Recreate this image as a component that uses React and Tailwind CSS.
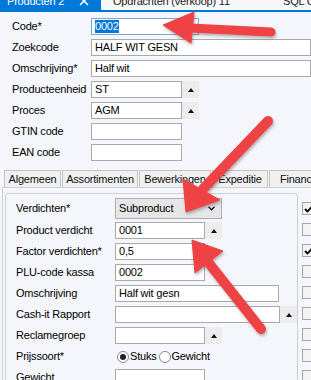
import React from "react";

const Spin = () => (
  <div className="w-[17px] h-[17px] bg-[#ececec] flex items-center justify-center">
    <svg width="6" height="4" viewBox="0 0 6 4">
      <path d="M3 0L6 4H0z" fill="#111" />
    </svg>
  </div>
);

function Input({ value, w, spin, grow, focus }) {
  return (
    <div className={`flex h-[17px] ${grow ? "flex-1" : ""}`}>
      <div
        className={`h-[17px] bg-white border flex items-center pl-[3px] whitespace-nowrap overflow-hidden ${
          focus ? "border-[#7aa7d9]" : "border-[#a9a9a9]"
        } ${grow ? "flex-1" : ""}`}
        style={grow ? undefined : { width: w }}
      >
        {focus ? <span className="bg-[#0078d7] text-white leading-[13px]">{value}</span> : value}
      </div>
      {spin && <Spin />}
    </div>
  );
}

function Row({ label, labelW, children, h = "h-[17px]" }) {
  return (
    <div className={`flex items-center ${h}`}>
      <div className="shrink-0 whitespace-nowrap" style={{ width: labelW }}>
        {label}
      </div>
      {children}
    </div>
  );
}

function Check({ on }) {
  return (
    <div className="w-[13px] h-[13px] border border-[#a6a6a6] bg-[#f3f3f3] flex items-center justify-center">
      {on && (
        <svg width="9" height="8" viewBox="0 0 9 8">
          <path d="M1 4l2.5 2.5L8 1.5" stroke="#000" strokeWidth="1.8" fill="none" />
        </svg>
      )}
    </div>
  );
}

function Radio({ on, label }) {
  return (
    <div className="flex items-center gap-[1px]">
      <div className="w-[12px] h-[12px] rounded-full border border-[#8a8a8a] bg-white flex items-center justify-center">
        {on && <div className="w-[6px] h-[6px] rounded-full bg-[#222]" />}
      </div>
      <span>{label}</span>
    </div>
  );
}

const tabs = [
  ["Algemeen", 57],
  ["Assortimenten", 76],
  ["Bewerkingen", 72],
  ["Expeditie", 56],
  ["Financiele", 70],
];

export default function App() {
  return (
    <div className="relative w-[311px] h-[380px] overflow-hidden bg-[#f5f6fb] font-['Liberation_Sans',Arial,sans-serif] text-[11px] text-black tracking-[-0.2px]">
      {/* document tabs */}
      <div className="flex h-[10px] overflow-hidden bg-[#f7f7f7] whitespace-nowrap">
        <div className="w-[101px] shrink-0 bg-[#0078d7] text-white flex items-start pl-[7px]">
          <span className="-mt-[4px] leading-[11px]">Producten 2</span>
          <svg className="ml-[15px] -mt-[4px]" width="10" height="10" viewBox="0 0 10 10">
            <path d="M1 1l8 8M9 1l-8 8" stroke="#fff" strokeWidth="1.6" />
          </svg>
        </div>
        <div className="w-[170px] shrink-0 flex items-start pl-[12px] text-[#222]">
          <span className="-mt-[4px] leading-[11px]">Opdrachten (verkoop) 11</span>
        </div>
        <div className="flex items-start pl-[12px] text-[#222]">
          <span className="-mt-[4px] leading-[11px]">SQL Commands</span>
        </div>
      </div>
      <div className="h-[2px] bg-[#0078d7]" />

      {/* header fields */}
      <div className="flex flex-col gap-[4px] pt-[6px] pl-[12px]">
        <Row label="Code*" labelW={79}>
          <Input value="0002" w={108} focus />
        </Row>
        <Row label="Zoekcode" labelW={79}>
          <Input value="HALF WIT GESN" grow />
        </Row>
        <Row label="Omschrijving*" labelW={79}>
          <Input value="Half wit" grow />
        </Row>
        <Row label="Producteenheid" labelW={79}>
          <Input value="ST" w={91} spin />
        </Row>
        <Row label="Proces" labelW={79}>
          <Input value="AGM" w={91} spin />
        </Row>
        <Row label="GTIN code" labelW={79}>
          <Input value="" w={91} />
        </Row>
        <Row label="EAN code" labelW={79}>
          <Input value="" w={91} />
        </Row>
      </div>

      {/* page tabs */}
      <div className="flex gap-[1px] mt-[9px] pl-[4px] h-[17px] whitespace-nowrap">
        {tabs.map(([t, w]) => (
          <div
            key={t}
            className="shrink-0 h-[17px] bg-[#f0f0f0] border border-b-0 border-[#c3c3c3] flex items-center justify-center text-[#111]"
            style={{ width: w }}
          >
            {t}
          </div>
        ))}
      </div>

      {/* tab page */}
      <div className="ml-[2px] border-l border-t border-[#cfcfcf] h-[200px] flex">
        <div className="ml-[2px] mt-[5px] w-[293px] h-[220px] shrink-0 border border-[#cfcfcf] rounded-[3px] pl-[10px] pt-[4px] flex flex-col">
          <Row label="Verdichten*" labelW={99} h="h-[21px]">
            <div className="w-[107px] h-[21px] bg-[#e6e6e6] border border-[#adadad] flex items-center pl-[3px] pr-[6px] justify-between">
              <span>Subproduct</span>
              <svg width="7" height="5" viewBox="0 0 7 5">
                <path d="M0.5 0.8L3.5 3.8L6.5 0.8" stroke="#111" strokeWidth="1.3" fill="none" />
              </svg>
            </div>
          </Row>
          <div className="flex flex-col gap-[4px] mt-[3px]">
            <Row label="Product verdicht" labelW={99}>
              <Input value="0001" w={90} spin />
            </Row>
            <Row label="Factor verdichten*" labelW={99}>
              <Input value="0,5" w={90} />
            </Row>
            <Row label="PLU-code kassa" labelW={99}>
              <Input value="0002" w={90} />
            </Row>
            <Row label="Omschrijving" labelW={99}>
              <Input value="Half wit gesn" w={164} />
            </Row>
            <Row label="Cash-it Rapport" labelW={99}>
              <Input value="" w={165} spin />
            </Row>
            <Row label="Reclamegroep" labelW={99}>
              <Input value="" w={90} spin />
            </Row>
            <Row label="Prijssoort*" labelW={101}>
              <div className="flex items-center gap-[2px]">
                <Radio on label="Stuks" />
                <Radio label="Gewicht" />
              </div>
            </Row>
            <Row label="Gewicht" labelW={99}>
              <Input value="" w={90} />
            </Row>
          </div>
        </div>
        <div className="ml-[4px] pt-[14px] flex flex-col gap-[8px]">
          <Check on />
          <Check />
          <Check on />
          <Check />
          <Check />
          <Check />
          <Check />
          <Check />
          <Check />
        </div>
      </div>

      {/* annotation arrows */}
      <svg className="absolute inset-0 pointer-events-none" width="311" height="380" viewBox="0 0 311 380">
        <defs>
          <filter id="sh" x="-20%" y="-20%" width="140%" height="140%">
            <feDropShadow dx="1" dy="2" stdDeviation="1.5" floodColor="#555" floodOpacity="0.45" />
          </filter>
        </defs>
        <g fill="#ef4245" stroke="#ef4245" filter="url(#sh)">
          <line x1="271" y1="32" x2="190" y2="28" strokeWidth="9" strokeLinecap="round" />
          <polygon points="163,25 194,12 191,43" strokeWidth="1" strokeLinejoin="round" />

          <line x1="268" y1="121" x2="203" y2="189" strokeWidth="10" strokeLinecap="round" />
          <polygon points="186,212 183,179 220,200" strokeWidth="1" strokeLinejoin="round" />

          <line x1="261" y1="329" x2="208" y2="262" strokeWidth="10" strokeLinecap="round" />
          <polygon points="192,240 223,251 195,273" strokeWidth="1" strokeLinejoin="round" />
        </g>
      </svg>
    </div>
  );
}
